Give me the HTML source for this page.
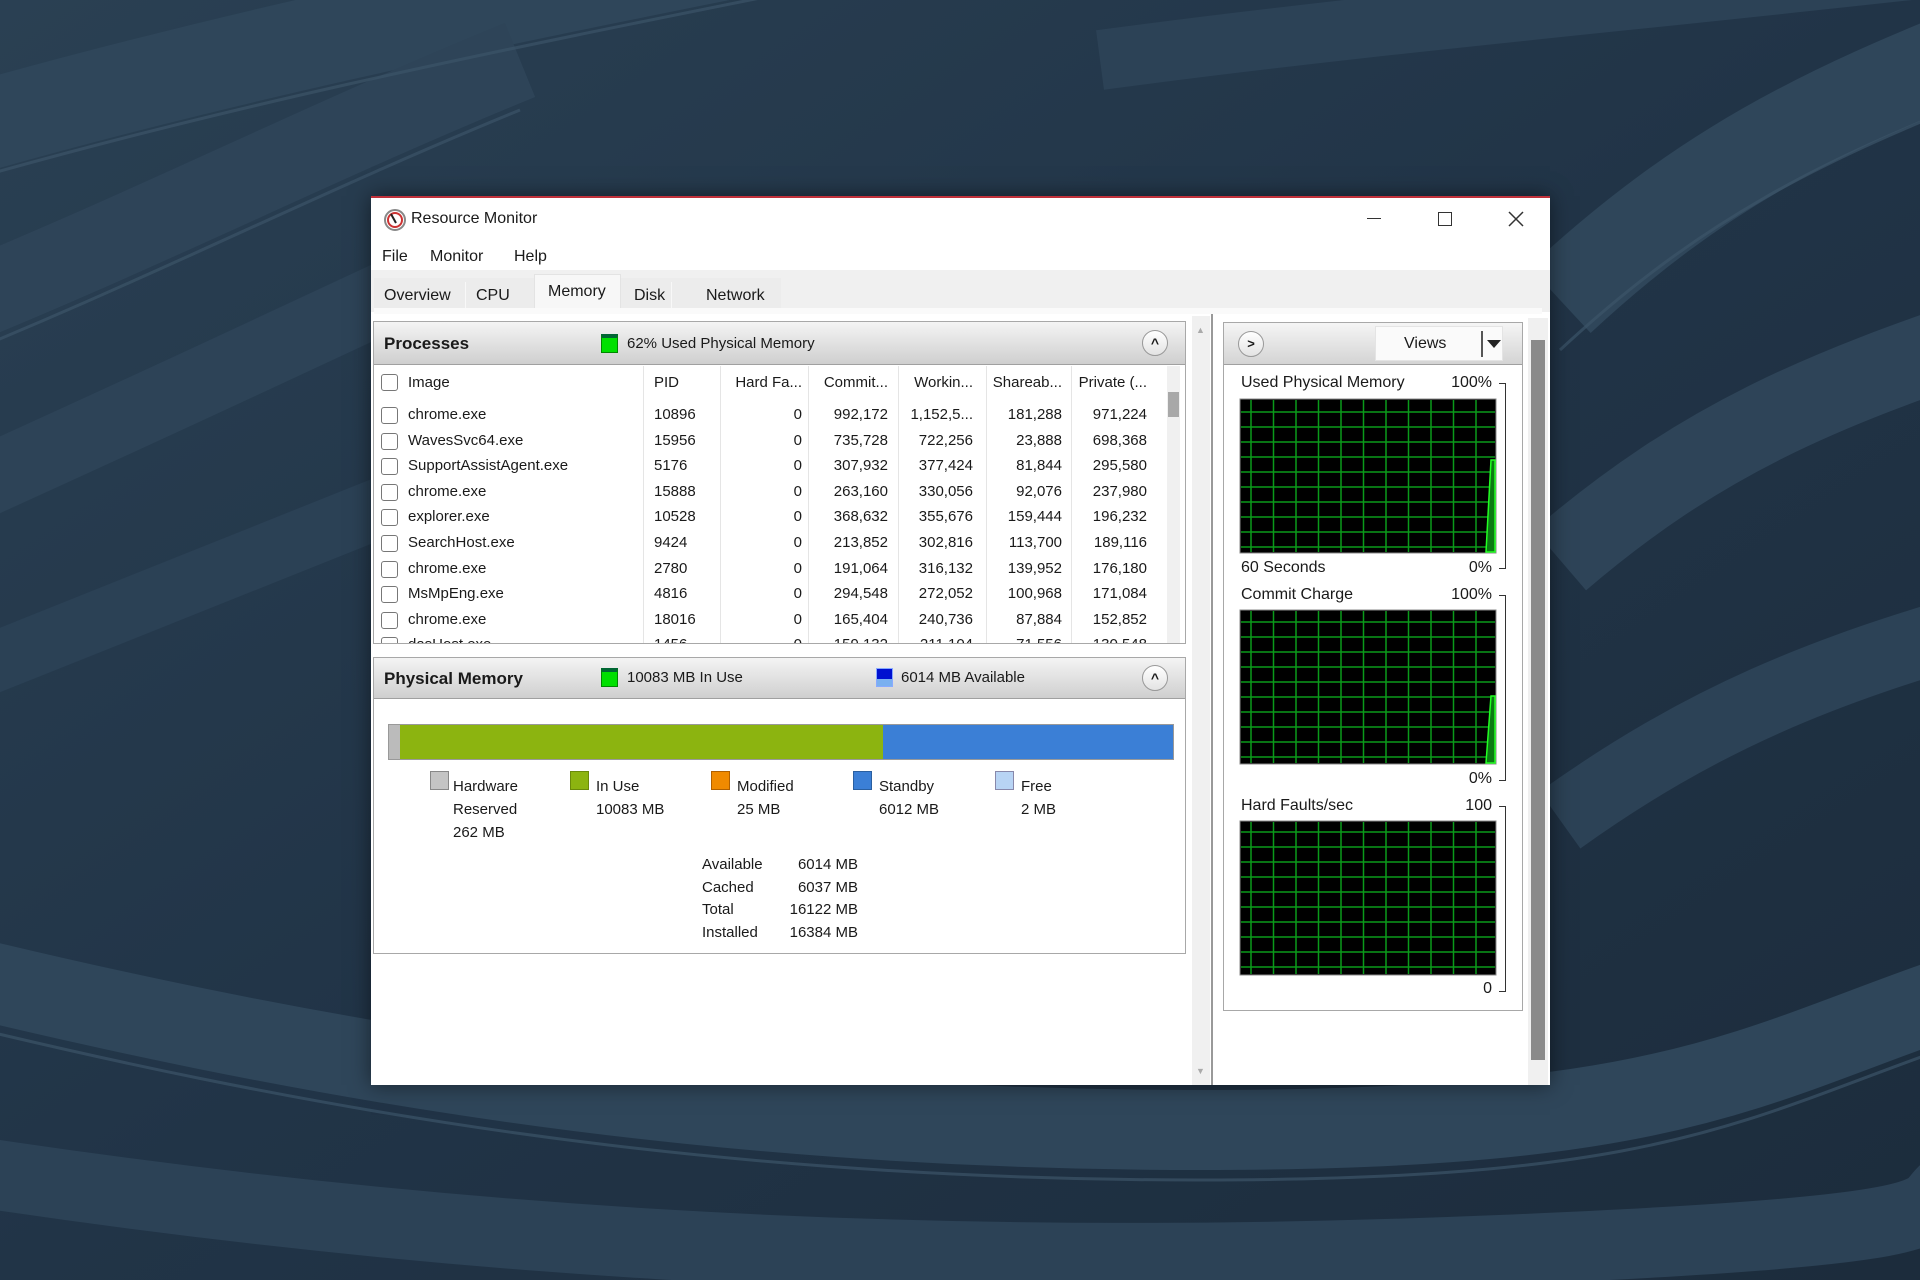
<!DOCTYPE html>
<html><head><meta charset="utf-8">
<style>
*{margin:0;padding:0;box-sizing:border-box}
body{width:1920px;height:1280px;overflow:hidden;position:relative;font-family:"Liberation Sans",sans-serif;font-size:15px;color:#1a1a1a;background:#22364a}
.a{position:absolute;white-space:nowrap}
.r{text-align:right}
.win{position:absolute;left:371px;top:196px;width:1179px;height:889px;background:#fff;border-top:2px solid #c0303a;box-shadow:0 0 20px rgba(0,0,0,.5)}
.panel{position:absolute;background:#fff;border:1px solid #a8a8a8}
.hdr{position:absolute;left:0;right:0;top:0;background:linear-gradient(#f4f4f4,#cfcfcf);border-bottom:1px solid #a0a0a0}
.cb{width:17px;height:17px;border:1.5px solid #777;border-radius:3px;background:#fff;position:absolute}
.circ{position:absolute;width:26px;height:26px;border-radius:50%;border:1px solid #999;background:linear-gradient(#fff,#e3e3e3);text-align:center;font-size:14px;line-height:24px;font-weight:bold}
.sq{position:absolute;width:17px;height:19px}
</style></head><body>
<svg class="a" style="left:0;top:0" width="1920" height="1280">
<defs><linearGradient id="bg" x1="0" y1="0" x2="1" y2="1"><stop offset="0" stop-color="#2a4053"/><stop offset="0.5" stop-color="#213447"/><stop offset="1" stop-color="#1c2c3c"/></linearGradient></defs>
<rect width="1920" height="1280" fill="url(#bg)"/>
<g fill="none" stroke-linecap="butt">
<path d="M-100 150 C 200 60, 500 0, 800 -60" stroke="#2f465a" stroke-width="90"/>
<path d="M-100 330 C 150 230, 300 150, 520 60" stroke="#2e4458" stroke-width="80"/>
<path d="M-100 520 C 100 430, 250 360, 400 290" stroke="#2d4357" stroke-width="70"/>
<path d="M-100 700 C 100 620, 250 560, 400 500" stroke="#2b4155" stroke-width="60"/>
<path d="M1560 300 C 1700 170, 1820 110, 2000 40" stroke="#2f465a" stroke-width="90"/>
<path d="M1560 560 C 1700 440, 1820 390, 2000 330" stroke="#2e4458" stroke-width="80"/>
<path d="M1560 820 C 1700 720, 1820 670, 2000 620" stroke="#2c4256" stroke-width="70"/>
<path d="M-100 960 C 300 1060, 700 1130, 1200 1130 S 1750 1060, 2000 980" stroke="#2f465a" stroke-width="80"/>
<path d="M-100 1160 C 400 1240, 900 1275, 1500 1250 S 1850 1200, 2000 1170" stroke="#2c4256" stroke-width="70"/>
<path d="M1100 60 C 1400 20, 1650 0, 2000 -40" stroke="#2c4256" stroke-width="60"/>
</g>
<g fill="none" stroke="#3c5468" stroke-width="3" opacity="0.7">
<path d="M-100 200 C 200 110, 500 50, 800 -10"/>
<path d="M-100 380 C 150 280, 300 200, 520 110"/>
<path d="M1560 350 C 1700 220, 1820 160, 2000 90"/>
<path d="M-100 1010 C 300 1110, 700 1180, 1200 1180 S 1750 1110, 2000 1030"/>
</g></svg>

<div class="win">
<svg class="a" style="left:12px;top:10px" width="24" height="24"><circle cx="12" cy="12" r="10" fill="#fff" stroke="#888" stroke-width="2"/><circle cx="12" cy="12" r="7" fill="#fff" stroke="#c33" stroke-width="2"/><path d="M8 6 L13 15" stroke="#222" stroke-width="2"/></svg>
<div class="a" style="left:40px;top:12px;font-size:16px">Resource Monitor</div>
<div class="a" style="left:996px;top:20px;width:14px;height:1px;background:#333"></div>
<div class="a" style="left:1067px;top:14px;width:14px;height:14px;border:1.5px solid #333"></div>
<svg class="a" style="left:1137px;top:13px" width="16" height="16"><path d="M1 1L15 15M15 1L1 15" stroke="#333" stroke-width="1.5"/></svg>
<div class="a" style="left:11px;top:50px;font-size:16px">File</div>
<div class="a" style="left:59px;top:50px;font-size:16px">Monitor</div>
<div class="a" style="left:143px;top:50px;font-size:16px">Help</div>
<!-- tabs -->
<div class="a" style="left:0;top:72px;width:1179px;height:42px;background:#f0f0f0"></div>
<div class="a" style="left:3px;top:80px;width:407px;height:30px;background:#ececec"></div>
<div class="a" style="left:94px;top:84px;width:1px;height:26px;background:#f8f8f8"></div>
<div class="a" style="left:13px;top:89px;font-size:16px">Overview</div>
<div class="a" style="left:105px;top:89px;font-size:16px">CPU</div>
<div class="a" style="left:163px;top:76px;width:87px;height:34px;background:#f7f7f7;border:1px solid #e3e3e3;border-bottom:none"></div>
<div class="a" style="left:177px;top:85px;font-size:16px">Memory</div>
<div class="a" style="left:263px;top:89px;font-size:16px">Disk</div>
<div class="a" style="left:300px;top:84px;width:1px;height:26px;background:#f8f8f8"></div>
<div class="a" style="left:335px;top:89px;font-size:16px">Network</div>
<div class="a" style="left:3px;top:110px;width:1168px;height:6px;background:#fafafa"></div>
</div>

<!-- processes panel -->
<div class="panel" style="left:373px;top:321px;width:813px;height:323px;overflow:hidden">
<div class="hdr" style="height:43px"></div>
<div class="a" style="left:10px;top:12px;font-size:17px;font-weight:bold">Processes</div>
<div class="sq" style="left:227px;top:12px;background:#00e000;border:1px solid #080;border-top:4px solid #063"></div>
<div class="a" style="left:253px;top:13px">62% Used Physical Memory</div>
<div class="circ" style="left:768px;top:8px">^</div>
<div class="a" style="left:793px;top:44px;width:13px;height:279px;background:#f0f0f0"></div>
<div class="a" style="left:794px;top:70px;width:11px;height:25px;background:#a8a8a8"></div>
<div class="a" style="left:269px;top:44px;width:1px;height:280px;background:#e5e5e5"></div>
<div class="a" style="left:346px;top:44px;width:1px;height:280px;background:#e5e5e5"></div>
<div class="a" style="left:434px;top:44px;width:1px;height:280px;background:#e5e5e5"></div>
<div class="a" style="left:524px;top:44px;width:1px;height:280px;background:#e5e5e5"></div>
<div class="a" style="left:612px;top:44px;width:1px;height:280px;background:#e5e5e5"></div>
<div class="a" style="left:697px;top:44px;width:1px;height:280px;background:#e5e5e5"></div>
</div>
<div class="a" style="left:373px;top:365px;width:800px;height:278px;overflow:hidden;font-size:15px">
<div class="cb" style="left:8px;top:9px"></div><div class="a" style="left:35px;top:9px">Image</div>
<div class="a" style="left:281px;top:9px">PID</div>
<div class="a r" style="left:329px;width:100px;top:9px">Hard Fa...</div>
<div class="a r" style="left:415px;width:100px;top:9px">Commit...</div>
<div class="a r" style="left:500px;width:100px;top:9px">Workin...</div>
<div class="a r" style="left:589px;width:100px;top:9px">Shareab...</div>
<div class="a r" style="left:674px;width:100px;top:9px">Private (...</div>
</div>
<div id="rows" class="a" style="left:373px;top:401px;width:793px;height:242px;overflow:hidden"></div>
<script>
var d=[["chrome.exe","10896","992,172","1,152,5...","181,288","971,224"],["WavesSvc64.exe","15956","735,728","722,256","23,888","698,368"],["SupportAssistAgent.exe","5176","307,932","377,424","81,844","295,580"],["chrome.exe","15888","263,160","330,056","92,076","237,980"],["explorer.exe","10528","368,632","355,676","159,444","196,232"],["SearchHost.exe","9424","213,852","302,816","113,700","189,116"],["chrome.exe","2780","191,064","316,132","139,952","176,180"],["MsMpEng.exe","4816","294,548","272,052","100,968","171,084"],["chrome.exe","18016","165,404","240,736","87,884","152,852"],["dasHost.exe","1456","159,132","211,104","71,556","130,548"]];
var h="";d.forEach(function(r,i){var t=i*25.6+5;
h+='<div class="cb" style="left:8px;top:'+(t+1)+'px"></div><div class="a" style="left:35px;top:'+t+'px">'+r[0]+'</div><div class="a" style="left:281px;top:'+t+'px">'+r[1]+'</div><div class="a r" style="left:329px;width:100px;top:'+t+'px">0</div><div class="a r" style="left:415px;width:100px;top:'+t+'px">'+r[2]+'</div><div class="a r" style="left:500px;width:100px;top:'+t+'px">'+r[3]+'</div><div class="a r" style="left:589px;width:100px;top:'+t+'px">'+r[4]+'</div><div class="a r" style="left:674px;width:100px;top:'+t+'px">'+r[5]+'</div>';});
document.getElementById('rows').innerHTML=h;
</script>

<!-- physical memory -->
<div class="panel" style="left:373px;top:657px;width:813px;height:297px">
<div class="hdr" style="height:41px"></div>
<div class="a" style="left:10px;top:11px;font-size:17px;font-weight:bold">Physical Memory</div>
<div class="sq" style="left:227px;top:10px;background:#00e000;border:1px solid #080;border-top:4px solid #063"></div>
<div class="a" style="left:253px;top:11px">10083 MB In Use</div>
<div class="sq" style="left:502px;top:10px;background:linear-gradient(#0010d0 60%,#7ab0f0 60%);border:1px solid #8af"></div>
<div class="a" style="left:527px;top:11px">6014 MB Available</div>
<div class="circ" style="left:768px;top:7px">^</div>
<div class="a" style="left:14px;top:66px;width:786px;height:36px;border:1px solid #999;background:linear-gradient(90deg,#bbb 0 11px,#8cb410 11px 494px,#3b7fd6 494px)"></div>
<div class="sq" style="left:56px;top:113px;width:19px;background:#c4c4c4;border:1px solid #888"></div>
<div class="a" style="left:79px;top:117px;line-height:23px">Hardware<br>Reserved<br>262 MB</div>
<div class="sq" style="left:196px;top:113px;width:19px;background:#8cb410;border:1px solid #6a8a0a"></div>
<div class="a" style="left:222px;top:117px;line-height:23px">In Use<br>10083 MB</div>
<div class="sq" style="left:337px;top:113px;width:19px;background:#f08a00;border:1px solid #b06000"></div>
<div class="a" style="left:363px;top:117px;line-height:23px">Modified<br>25 MB</div>
<div class="sq" style="left:479px;top:113px;width:19px;background:#3b7fd6;border:1px solid #2a5fa0"></div>
<div class="a" style="left:505px;top:117px;line-height:23px">Standby<br>6012 MB</div>
<div class="sq" style="left:621px;top:113px;width:19px;background:#b8d4f4;border:1px solid #88a"></div>
<div class="a" style="left:647px;top:117px;line-height:23px">Free<br>2 MB</div>
<div class="a" style="left:328px;top:196px;line-height:22.6px">Available<br>Cached<br>Total<br>Installed</div>
<div class="a r" style="left:384px;width:100px;top:196px;line-height:22.6px">6014 MB<br>6037 MB<br>16122 MB<br>16384 MB</div>
</div>

<!-- middle scrollbar -->
<div class="a" style="left:1192px;top:316px;width:18px;height:769px;background:#f0f0f0"></div>
<div class="a" style="left:1196px;top:325px;color:#aaa;font-size:9px">▲</div>
<div class="a" style="left:1196px;top:1066px;color:#aaa;font-size:9px">▼</div>
<div class="a" style="left:1211px;top:314px;width:2px;height:771px;background:#999"></div>

<!-- right pane -->
<div class="panel" style="left:1223px;top:322px;width:300px;height:689px">
<div class="hdr" style="height:42px;background:linear-gradient(#f5f5f5,#d4d4d4)"></div>
<div class="circ" style="left:14px;top:8px;font-size:13px">&gt;</div>
<div class="a" style="left:151px;top:3px;width:128px;height:35px;background:#fafafa;border:1px solid #e4e4e4"></div>
<div class="a" style="left:180px;top:12px;font-size:16px">Views</div>
<div class="a" style="left:257px;top:8px;width:2px;height:26px;background:#555"></div>
<div class="a" style="left:263px;top:17px;border-left:7px solid transparent;border-right:7px solid transparent;border-top:8px solid #222"></div>
</div>
<div class="a" style="left:1241px;top:374px;font-size:16px">Used Physical Memory</div>
<div class="a r" style="left:1400px;width:92px;top:374px;font-size:16px">100%</div>
<div class="a" style="left:1241px;top:559px;font-size:16px">60 Seconds</div>
<div class="a r" style="left:1400px;width:92px;top:559px;font-size:16px">0%</div>
<div class="a" style="left:1241px;top:586px;font-size:16px">Commit Charge</div>
<div class="a r" style="left:1400px;width:92px;top:586px;font-size:16px">100%</div>
<div class="a r" style="left:1400px;width:92px;top:770px;font-size:16px">0%</div>
<div class="a" style="left:1241px;top:797px;font-size:16px">Hard Faults/sec</div>
<div class="a r" style="left:1400px;width:92px;top:797px;font-size:16px">100</div>
<div class="a r" style="left:1400px;width:92px;top:980px;font-size:16px">0</div>
<div class="a" style="left:1499px;top:383px;width:7px;height:186px;border:1.5px solid #333;border-left:none"></div>
<div class="a" style="left:1499px;top:595px;width:7px;height:186px;border:1.5px solid #333;border-left:none"></div>
<div class="a" style="left:1499px;top:806px;width:7px;height:186px;border:1.5px solid #333;border-left:none"></div>
<svg class="a" style="left:0;top:0" width="1920" height="1280">
<defs><pattern id="g" x="1240" y="0" width="22.5" height="15" patternUnits="userSpaceOnUse"><path d="M11 0V15M0 7H22.5" stroke="#0a9a1a" stroke-width="1.5" fill="none"/></pattern></defs>
<rect x="1240" y="399" width="256" height="154" fill="#000" stroke="#888"/><rect x="1241" y="400" width="254" height="152" fill="url(#g)"/>
<path d="M1486 552 L1491 460 L1495 460 L1495 552Z" fill="#0c7a14" stroke="#2f2" stroke-width="1.5"/>
<rect x="1240" y="610" width="256" height="154" fill="#000" stroke="#888"/><rect x="1241" y="611" width="254" height="152" fill="url(#g)"/>
<path d="M1486 763 L1491 696 L1495 696 L1495 763Z" fill="#0c7a14" stroke="#2f2" stroke-width="1.5"/>
<rect x="1240" y="821" width="256" height="154" fill="#000" stroke="#888"/><rect x="1241" y="822" width="254" height="152" fill="url(#g)"/>
</svg>
<!-- right scrollbar -->
<div class="a" style="left:1528px;top:318px;width:20px;height:767px;background:#f0f0f0"></div>
<div class="a" style="left:1531px;top:340px;width:14px;height:720px;background:#8a8a8a"></div>
</body></html>
